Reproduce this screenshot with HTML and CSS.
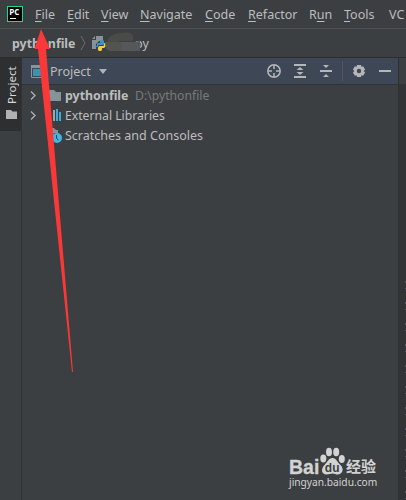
FILE: index.html
```html
<!DOCTYPE html>
<html lang="en">
<head>
  <meta charset="UTF-8">
  <meta name="viewport" content="width=device-width, initial-scale=1.0">
  <title>pythonfile</title>
  <link rel="stylesheet" href="styles.css">
</head>
<body>
  <div class="window">
    <nav class="menu-bar">
      <svg class="app-icon" width="16" height="16" viewBox="0 0 16 16">
        <rect x=".5" y=".5" width="15" height="15" fill="#000" stroke="#21d789"/>
        <text class="app-text" x="2.2" y="9">PC</text>
        <path d="M3 12.5h6" stroke="#fff"/>
      </svg>
      <span class="menu-item file"><u>F</u>ile</span>
      <span class="menu-item edit"><u>E</u>dit</span>
      <span class="menu-item view"><u>V</u>iew</span>
      <span class="menu-item navigate"><u>N</u>avigate</span>
      <span class="menu-item code"><u>C</u>ode</span>
      <span class="menu-item refactor"><u>R</u>efactor</span>
      <span class="menu-item run">R<u>u</u>n</span>
      <span class="menu-item tools"><u>T</u>ools</span>
      <span class="menu-item">VC</span>
    </nav>

    <div class="breadcrumb">
      <b class="crumb">pythonfile</b>
      <svg class="crumb-arrow" width="6" height="18" viewBox="0 0 6 18"><path d="M1 2l4 7-4 7" fill="none" stroke="#6b6e70"/></svg>
      <svg class="py-icon" width="14" height="15" viewBox="0 0 14 15">
        <path d="M4 0h7v5H7L4 8v5H0V4h4z" fill="#87929a"/>
        <path d="M0 3L3 0v3z" fill="#87929a"/>
        <path d="M5 10V8q0-1 1-1h2V5q0-1 2-1t2 1v3q0 1-1 1H7q-1 0-1 2H5q-2 0-2-2z" fill="#3f92c4"/>
        <path d="M12 7q2 0 2 2t-2 3h-2v2q0 1-2 1t-2-1v-2q0-2 2-2h3q1 0 1-1z" fill="#f4cc45"/>
      </svg>
      <span class="crumb-file">py</span>
      <svg class="smudge" width="37" height="22" viewBox="0 0 37 22"><path d="M1 19Q1 4 15 3q12-2 13 3v5H14v8z" fill="#4a4a49"/><path d="M0 12h19v9H5q-5-1-5-9z" fill="#535450"/><path d="M17 12h11l7-1v10H17z" fill="#555859"/></svg>
    </div>

    <div class="workspace">
      <aside class="stripe">
        <div class="stripe-tab">
          <span class="stripe-text">Project</span>
          <svg width="11" height="9" viewBox="0 0 11 9"><path d="M0 0h5l1.5 1.5H11V9H0z" fill="#afb1b3"/></svg>
        </div>
      </aside>

      <main class="project">
        <header class="project-header">
          <svg class="view-icon" width="13" height="13" viewBox="0 0 13 13"><path d="M.5.5h12v12H.5z" fill="none" stroke="#89949c"/><path d="M0 0h13v3H0z" fill="#89949c"/><path d="M2 4h9v7H2z" fill="#3e91b1"/></svg>
          <span class="project-title">Project</span>
          <svg class="dropdown" width="8" height="5" viewBox="0 0 8 5"><path d="M0 0h8L4 5z" fill="#afb1b3"/></svg>
          <svg class="tools-icons" width="126" height="20" viewBox="0 0 126 20">
            <g fill="none" stroke="#b4b6b8" stroke-width="1.5">
              <circle cx="8" cy="10" r="6.2"/>
              <path d="M8 4v4M8 12v4M2 10h4M10 10h4"/>
            </g>
            <g fill="#b4b6b8">
              <path d="M28 3h12v2H28zM28 15h12v2H28zM34 6l3.5 3h-7zM34 14l3.5-3h-7z"/>
              <path d="M54 9h12v2H54zM60 7l3-3h-6zM60 13l3 3h-6z"/>
              <path d="M91 4h4l.4 1.8 1.7-.6 2 3.3-1.4 1.5 1.4 1.5-2 3.3-1.7-.6L95 16h-4l-.4-1.8-1.7.6-2-3.3 1.4-1.5-1.4-1.5 2-3.3 1.7.6z"/>
              <path d="M113 9h12v2h-12z"/>
            </g>
            <circle cx="93" cy="10" r="2.2" fill="#3d4755"/>
            <path d="M76.5 0v20" stroke="#545657"/>
          </svg>
        </header>

        <ul class="tree">
          <li class="tree-row">
            <svg class="chevron" width="6" height="9" viewBox="0 0 6 9"><path d="M1 .5l4 4-4 4" fill="none" stroke="#afb1b3" stroke-width="1.3"/></svg>
            <svg class="node-icon" width="14" height="12" viewBox="0 0 14 12"><path d="M1 1h5l2 2h5v9H1z" fill="#87939a"/></svg>
            <b class="root-name">pythonfile</b>
            <span class="path">D:\pythonfile</span>
          </li>
          <li class="tree-row">
            <svg class="chevron" width="6" height="9" viewBox="0 0 6 9"><path d="M1 .5l4 4-4 4" fill="none" stroke="#afb1b3" stroke-width="1.3"/></svg>
            <svg class="node-icon" width="14" height="12" viewBox="0 0 14 12"><path d="M1 4h2v8H1zM5 1h2v11H5z" fill="#9aa7b0"/><path d="M8 0h2v12H8zM11 3h2v9h-2z" fill="#40a9d5"/></svg>
            <span class="libraries">External Libraries</span>
          </li>
          <li class="tree-row">
            <span class="chevron"></span>
            <svg class="node-icon" width="14" height="15" viewBox="0 0 14 15"><path d="M1 0h5l2 2h2v3H6l-3 6H1z" fill="#87939a"/><circle cx="9" cy="10" r="5" fill="#40b6e0"/><path d="M8.5 7v3.5l2 1.5" fill="none" stroke="#34434b"/></svg>
            <span class="scratches">Scratches and Consoles</span>
          </li>
        </ul>
      </main>

      <div class="editor"><div class="editor-tabs"></div><div class="code-edge"></div></div>
    </div>

    <svg class="pointer" width="48" height="350" viewBox="0 0 48 350">
      <path d="M11 1l9 20h-4l27 323h-1L8 21H4.500z" fill="#fb3838"/>
    </svg>

    <div class="watermark">
      <div class="logo">
        <span class="bai">Bai</span>
        <svg class="paw" width="25" height="28" viewBox="0 0 25 28">
          <g fill="#d2d3d3">
            <ellipse cx="3.3" cy="11.500" rx="3" ry="3.9"/>
            <ellipse cx="9" cy="5" rx="3" ry="4.3"/>
            <ellipse cx="16.2" cy="5" rx="3" ry="4.3"/>
            <ellipse cx="21.8" cy="12" rx="3" ry="3.9"/>
            <path d="M12.500 11c4 0 4.500 4 8 7 4 4 2 9.500-3 9.500-3 0-3-1-5-1s-3 1-6 1c-5 0-6-5.500-2-9.500 3-3 4-7 8-7z"/>
          </g>
          <text class="du" x="4.800" y="24.500">du</text>
        </svg>
        <span class="jingyan">经验</span>
      </div>
      <div class="site">jingyan.baidu.com</div>
    </div>
  </div>
</body>
</html>
```

FILE: styles.css
```css
body {
  margin: 0;
  background: #3c3f41;
  color: #bbbdbf;
  font-family: "Noto Sans", "Noto Sans CJK SC", sans-serif;
  font-size: 12.5px;
}
svg {
  display: block;
  flex: none;
}
.window {
  position: relative;
  width: 406px;
  height: 500px;
  overflow: hidden;
  display: flex;
  flex-direction: column;
}
.menu-bar {
  display: flex;
  align-items: center;
  box-sizing: border-box;
  height: 29px;
  flex: none;
  padding-left: 7px;
  border-bottom: 1px solid #515151;
  white-space: nowrap;
}
.app-icon { margin-right: 12px; }
.app-text {
  font: bold 8px "Open Sans", sans-serif;
  fill: #fff;
}
.menu-item {
  flex: none;
  line-height: 18px;
  padding-top: 2px;
}
.menu-item u {
  text-underline-offset: 2px;
  text-decoration-thickness: 1px;
}
.file { width: 32px; }
.edit { width: 34px; }
.view { width: 39px; }
.navigate { width: 65px; }
.code { width: 43px; }
.refactor { width: 61px; }
.run { width: 35px; }
.tools { width: 45px; }
.breadcrumb {
  position: relative;
  display: flex;
  align-items: center;
  box-sizing: border-box;
  height: 28px;
  flex: none;
  padding-left: 12px;
}
.crumb { width: 68px; font-size: 12.4px; }
.py-icon { margin-left: 6px; }
.crumb-file { margin-left: 29px; }
.smudge {
  position: absolute;
  left: 105px;
  top: 1px;
}
.workspace {
  display: flex;
  flex: 1;
  border-top: 1px solid #2b2d2e;
  border-bottom: 1px solid #323436;
}
.stripe {
  width: 21px;
  border-right: 1px solid #303234;
}
.stripe-tab {
  display: flex;
  flex-direction: column;
  align-items: center;
  height: 73px;
  padding-left: 2px;
  background: #2d2f30;
}
.stripe-text {
  writing-mode: vertical-rl;
  transform: rotate(180deg);
  height: 37px;
  margin: 9px 0 6px;
  font-size: 11.5px;
  line-height: 16px;
  color: #d5d6d7;
}
.project {
  width: 376px;
  border-right: 1px solid #2e3032;
}
.project-header {
  display: flex;
  align-items: center;
  height: 26px;
  padding-left: 9px;
  background: #3d4755;
  border-bottom: 1px solid #303336;
}
.project-title { width: 41px; margin-left: 6px; }
.dropdown { margin-left: 8px; }
.tools-icons { margin-left: 159px; }
.tree {
  margin: 0;
  padding: 0 0 0 8px;
  list-style: none;
}
.tree-row {
  display: flex;
  align-items: center;
  height: 20px;
  white-space: nowrap;
}
.chevron { width: 6px; }
.node-icon { margin: 0 3px 0 12px; }
.root-name { width: 65px; font-size: 12.4px; }
.path {
  margin-left: 5px;
  font-size: 12.2px;
  color: #777a7b;
}
.libraries { font-size: 12.2px; }
.editor {
  flex: 1;
  background: #313335;
}
.editor-tabs {
  height: 26px;
  background: #3c3f41;
}
.code-edge {
  width: 1px;
  height: 220px;
  margin: 197px 0 0 6px;
  background: repeating-linear-gradient(#53576c 0 2px, transparent 2px 7px, #53576c 7px 8px, transparent 8px 21px);
}
.pointer {
  position: absolute;
  left: 30px;
  top: 28px;
}
.watermark {
  position: absolute;
  left: 289px;
  top: 446px;
  width: 90px;
  color: #d2d3d3;
}
.logo {
  display: flex;
  align-items: flex-end;
  height: 29px;
}
.bai {
  width: 31px;
  font: bold 19.5px/16px "Liberation Sans", sans-serif;
  -webkit-text-stroke: 0.3px #d2d3d3;
}
.du {
  font: bold 12px "Liberation Sans", sans-serif;
  fill: #3c3f41;
}
.jingyan {
  margin-left: 1px;
  font: bold 15px/18px "Noto Sans CJK SC", sans-serif;
}
.site {
  font-size: 10.2px;
  line-height: 14px;
  white-space: nowrap;
}
```
